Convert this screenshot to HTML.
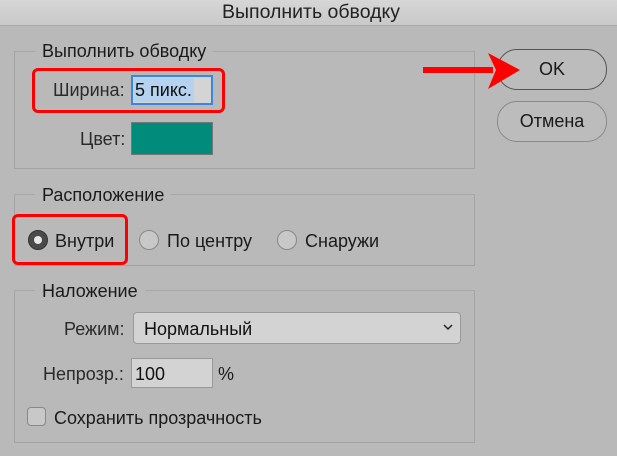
<!DOCTYPE html>
<html><head><meta charset="utf-8"><style>
*{margin:0;padding:0;box-sizing:border-box}
body{width:617px;height:456px;background:#b9b9b9;font-family:"Liberation Sans",sans-serif;color:#1a1a1a;position:relative;overflow:hidden;font-size:18px}
.a{position:absolute}
.t{position:absolute;line-height:20px;white-space:nowrap}
.box{position:absolute;border:1px solid #a3a3a3;border-top-color:#a8a8a8}
.leg{position:absolute;background:#b9b9b9;padding:0 7px;line-height:20px;font-size:18px}
.btn{position:absolute;border-radius:20px;text-align:center;font-size:18px;line-height:38px}
.radio{position:absolute;width:20px;height:20px;border-radius:50%;border:1px solid #888;background:#c8c8c8}
</style></head><body>
<div class="a" style="left:0;top:0;width:617px;height:26px;background:linear-gradient(#d6d6d6,#c9c9c9);border-bottom:1px solid #a8a8a8"></div>
<div class="t" style="left:222px;top:2px;font-size:19.5px;color:#222">Выполнить обводку</div>

<div class="box" style="left:14px;top:51px;width:461px;height:118px"></div>
<div class="leg" style="left:35px;top:41px">Выполнить обводку</div>
<div class="a" style="left:32px;top:68px;width:193px;height:45px;border:3px solid #f00;border-radius:6px"></div>
<div class="t" style="left:53px;top:80px;color:#2a2a2a">Ширина:</div>
<div class="a" style="left:131px;top:75px;width:82px;height:30px;border:2px solid #3a86e0;background:#d4d4d4"></div>
<div class="a" style="left:134px;top:78px;width:60px;height:24px;background:#b5d2ee"></div>
<div class="t" style="left:135px;top:80px;color:#111">5 пикс.</div>
<div class="t" style="left:80px;top:129px;color:#2a2a2a">Цвет:</div>
<div class="a" style="left:131px;top:122px;width:82px;height:33px;background:#008b7a;border:1px solid #777"></div>

<div class="btn" style="left:497px;top:49px;width:110px;height:41px;border:1.5px solid #555;background:#bcbcbc">OK</div>
<div class="btn" style="left:497px;top:101px;width:110px;height:41px;border:1px solid #8a8a8a;background:#bcbcbc">Отмена</div>
<svg class="a" style="left:420px;top:50px" width="110" height="42"><rect x="3" y="17" width="70" height="6" fill="#f00"/><polygon points="68,3 100,20 68,39 76,20" fill="#f00"/></svg>

<div class="box" style="left:14px;top:194px;width:461px;height:72px"></div>
<div class="leg" style="left:35px;top:185px">Расположение</div>
<div class="a" style="left:12px;top:214px;width:116px;height:51px;border:3px solid #f00;border-radius:6px"></div>
<div class="radio" style="left:28px;top:230px;background:#4a4a4a;border-color:#333"></div>
<div class="a" style="left:34px;top:236px;width:8px;height:8px;border-radius:50%;background:#e8e8e8"></div>
<div class="t" style="left:55px;top:231px">Внутри</div>
<div class="radio" style="left:139px;top:230px"></div>
<div class="t" style="left:167px;top:231px">По центру</div>
<div class="radio" style="left:277px;top:230px"></div>
<div class="t" style="left:305px;top:231px">Снаружи</div>

<div class="box" style="left:14px;top:290px;width:461px;height:153px"></div>
<div class="leg" style="left:35px;top:281px">Наложение</div>
<div class="t" style="left:64px;top:319px;color:#2a2a2a">Режим:</div>
<div class="a" style="left:133px;top:312px;width:328px;height:32px;border:1px solid #999;border-radius:4px;background:#d3d3d3"></div>
<div class="t" style="left:144px;top:319px;color:#111">Нормальный</div>
<svg class="a" style="left:443px;top:324px" width="10" height="7"><path d="M1 1L5 5L9 1" stroke="#222" stroke-width="1.5" fill="none"/></svg>
<div class="t" style="left:43px;top:364px;color:#2a2a2a">Непрозр.:</div>
<div class="a" style="left:131px;top:358px;width:82px;height:30px;border:1px solid #999;background:#d3d3d3"></div>
<div class="t" style="left:135px;top:364px;color:#111">100</div>
<div class="t" style="left:218px;top:364px">%</div>
<div class="a" style="left:27px;top:407px;width:19px;height:19px;border:1px solid #888;border-radius:4px;background:#c8c8c8"></div>
<div class="t" style="left:54px;top:408px">Сохранить прозрачность</div>
</body></html>
